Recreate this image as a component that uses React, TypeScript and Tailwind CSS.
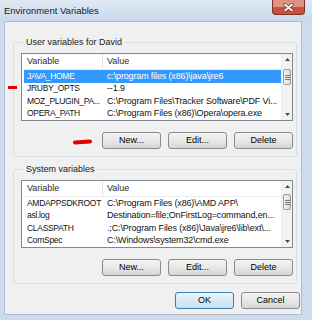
import React from 'react'

type Row = { name: string; value: string; selected?: boolean }

const userVars: Row[] = [
  { name: 'JAVA_HOME', value: 'c:\\program files (x86)\\java\\jre6', selected: true },
  { name: 'JRUBY_OPTS', value: '--1.9' },
  { name: 'MOZ_PLUGIN_PA...', value: 'C:\\Program Files\\Tracker Software\\PDF Vi...' },
  { name: 'OPERA_PATH', value: 'C:\\Program Files (x86)\\Opera\\opera.exe' },
]

const systemVars: Row[] = [
  { name: 'AMDAPPSDKROOT', value: 'C:\\Program Files (x86)\\AMD APP\\' },
  { name: 'asl.log', value: 'Destination=file;OnFirstLog=command,en...' },
  { name: 'CLASSPATH', value: '.;C:\\Program Files (x86)\\Java\\jre6\\lib\\ext\\...' },
  { name: 'ComSpec', value: 'C:\\Windows\\system32\\cmd.exe' },
]

function Button({ label, primary }: { label: string; primary?: boolean }) {
  return (
    <button
      className={
        'h-[17px] w-[59px] rounded-[3px] border text-[9px] leading-none text-black ' +
        (primary
          ? 'border-[#3c7fb1] bg-linear-to-b from-[#eaf5fc] to-[#c4e1f3]'
          : 'border-[#8a8a8a] bg-linear-to-b from-[#f4f4f4] via-[#e8e8e8] to-[#d6d6d6]')
      }
    >
      {label}
    </button>
  )
}

function ScrollBar({ thumbTop }: { thumbTop: number }) {
  return (
    <div className="flex w-[11px] flex-col bg-[#f2f2f2] border-l border-[#ebebeb]">
      <div className="flex h-[11px] items-center justify-center">
        <svg width="5" height="3" viewBox="0 0 5 3">
          <path d="M0 3 L2.5 0 L5 3 Z" fill="#4a4a4a" />
        </svg>
      </div>
      <div style={{ height: thumbTop }} />
      <div className="mx-[1px] flex h-[16px] flex-col items-center justify-center gap-[1px] rounded-[2px] border border-[#9b9b9b] bg-linear-to-r from-[#f3f3f3] to-[#dcdcdc]">
        <div className="h-px w-[5px] bg-[#7a7a7a]" />
        <div className="h-px w-[5px] bg-[#7a7a7a]" />
        <div className="h-px w-[5px] bg-[#7a7a7a]" />
      </div>
      <div className="flex-1" />
      <div className="flex h-[11px] items-center justify-center">
        <svg width="5" height="3" viewBox="0 0 5 3">
          <path d="M0 0 L2.5 3 L5 0 Z" fill="#4a4a4a" />
        </svg>
      </div>
    </div>
  )
}

function ListBox({ rows, thumbTop }: { rows: Row[]; thumbTop: number }) {
  return (
    <div className="flex h-[68px] border border-[#828790] bg-white">
      <div className="flex min-w-0 flex-1 flex-col">
        <div className="flex h-[16px] items-center pl-[2px] text-[#2b2b2b] border-b border-[#ededed]">
          <div className="w-[79px] pl-[3px] h-full flex items-center border-r border-[#e3e3e3]">Variable</div>
          <div className="pl-[4px]">Value</div>
        </div>
        {rows.map((r) => (
          <div key={r.name} className="flex h-[12.5px] pl-[2px]">
            <div
              className={
                'flex min-w-0 flex-1 items-center ' +
                (r.selected ? 'bg-[#3399ff] text-white' : 'text-[#111]')
              }
            >
              <div className="w-[79px] shrink-0 overflow-hidden whitespace-nowrap pl-[3px] text-[8.5px] tracking-[-0.3px]">
                {r.name}
              </div>
              <div className="min-w-0 flex-1 overflow-hidden whitespace-nowrap pl-[4px] tracking-[-0.15px]">{r.value}</div>
            </div>
          </div>
        ))}
      </div>
      <ScrollBar thumbTop={thumbTop} />
    </div>
  )
}

function Group({ title, rows, thumbTop }: { title: string; rows: Row[]; thumbTop: number }) {
  return (
    <fieldset className="w-[284px] rounded-[3px] border border-[#d5dfe5] pl-[7px] pr-[3px] pb-[7px]">
      <legend className="ml-[3px] px-[2px] text-[9px] leading-[11px] text-[#1a1a1a]">{title}</legend>
      <div className="pt-[5px]">
        <ListBox rows={rows} thumbTop={thumbTop} />
      </div>
      <div className="mt-[11px] flex justify-end gap-[7px]">
        <Button label="New..." />
        <Button label="Edit..." />
        <Button label="Delete" />
      </div>
    </fieldset>
  )
}

export default function App() {
  return (
    <div className="relative flex h-[320px] w-[312px] flex-col overflow-hidden bg-[#cddcec] font-['Liberation_Sans',sans-serif] text-[9px]">
      <div className="relative h-[21px] shrink-0 bg-linear-to-b from-[#dfeaf5] via-[#d3e1f0] to-[#c9d9eb]">
        <div className="flex h-full items-center pl-[4px] pt-[1px] text-[9.5px] text-[#1b1b1b]">Environment Variables</div>
        <div className="absolute right-[7px] top-0 z-10 flex h-[15px] w-[33px] items-center justify-center rounded-b-[4px] border border-t-0 border-[#7e3328] bg-[#c8503d]">
          <div className="absolute inset-x-0 top-0 h-[7px] bg-[#de9382]" />
          <svg className="relative" width="11" height="9" viewBox="0 0 11 9">
            <path d="M2 1.5 L9 7.5 M9 1.5 L2 7.5" stroke="#6e2a20" strokeWidth="3.2" strokeLinecap="round" />
            <path d="M2 1.5 L9 7.5 M9 1.5 L2 7.5" stroke="#ffffff" strokeWidth="1.8" strokeLinecap="round" />
          </svg>
        </div>
      </div>

      <div className="flex flex-1 pl-[4px]">
        <div className="mb-[5px] flex w-[298px] flex-col border border-[#aebdcd] bg-[#f0f0f0] pl-[8px]">
          <div className="mt-[15px]">
            <Group title="User variables for David" rows={userVars} thumbTop={4} />
          </div>
          <div className="mt-[7px]">
            <Group title="System variables" rows={systemVars} thumbTop={2} />
          </div>
          <div className="mt-[8px] flex justify-end gap-[7px] pr-[1px]">
            <Button label="OK" primary />
            <Button label="Cancel" />
          </div>
        </div>
      </div>

      <div className="absolute left-[8px] top-[86px] h-[3px] w-[9px] bg-[#e00000]" />
      <div className="absolute left-[73px] top-[140px] h-[4px] w-[19px] -rotate-3 rounded-full bg-[#e00000]" />
    </div>
  )
}
